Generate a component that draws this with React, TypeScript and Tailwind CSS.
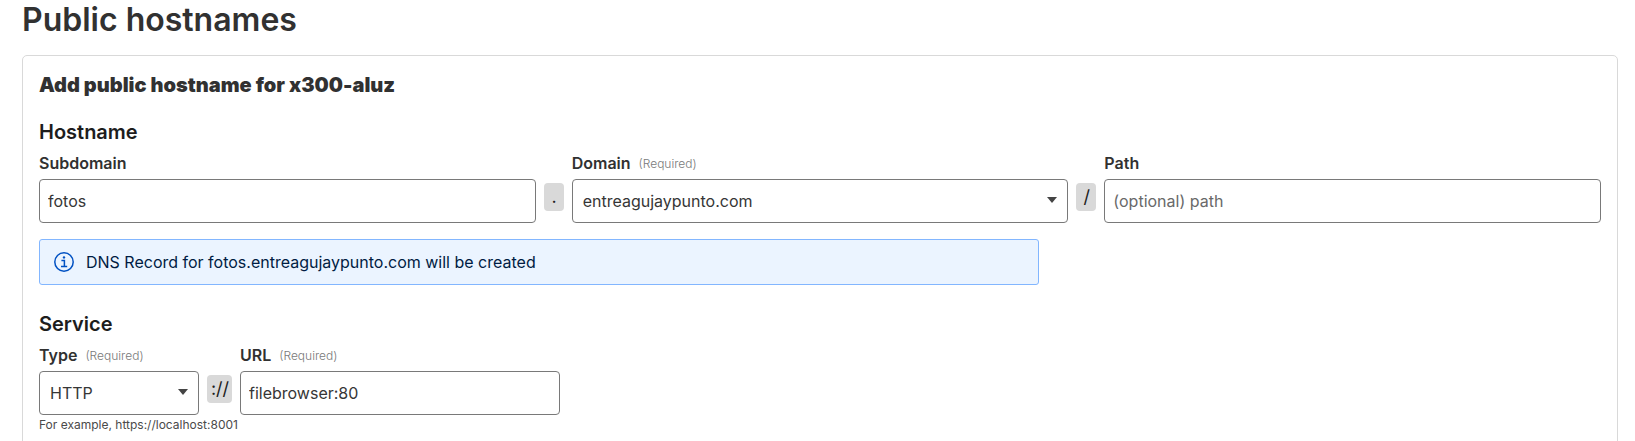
import type { ReactNode } from "react";

const box = "flex h-11 items-center rounded-[4px] border border-[#797979] text-base text-[#363636]";

function Label({ children, required }: { children: ReactNode; required?: boolean }) {
  return (
    <div className="flex h-6 items-center text-base leading-6 font-semibold text-[#313131]">
      {children}
      {required && <span className="mt-0.5 ml-2 text-[12px] leading-4 font-light text-[#797979]">(Required)</span>}
    </div>
  );
}

function Input({ value, placeholder }: { value?: string; placeholder?: string }) {
  return (
    <input
      className={`mt-1 w-full bg-white px-2 outline-none placeholder:text-[#696969] ${box}`}
      defaultValue={value}
      placeholder={placeholder}
    />
  );
}

function Select({ value }: { value: string }) {
  return (
    <div className={`mt-1 justify-between px-2.5 ${box}`}>
      {value}
      <svg width="10" height="6" viewBox="0 0 10 6" className="mb-[3px] shrink-0">
        <path d="M0 0h10L5 6z" fill="#444" />
      </svg>
    </div>
  );
}

function Chip({ children, wide }: { children: ReactNode; wide?: boolean }) {
  return (
    <div className={`mx-2 mt-8 flex h-7 shrink-0 items-center justify-center rounded bg-[#d9d9d9] pl-px text-[18px] leading-7 text-[#1d1d1d] ${wide ? "w-[25px]" : "w-5"}`}>
      {children}
    </div>
  );
}

export default function App() {
  return (
    <main className="h-[441px] overflow-hidden bg-white pr-[17px] pl-[22px] font-['Inter',sans-serif] text-[#313131]">
      <h1 className="h-[55px] text-[32px] leading-10 font-semibold">Public hostnames</h1>
      <section className="h-[500px] rounded-[5px] border border-[#d9d9d9] px-4 pt-4">
        <h2 className="text-xl leading-[26px] font-black">Add public hostname for x300-aluz</h2>
        <h3 className="mt-[21px] text-xl leading-[26px] font-semibold text-[#1d1d1d]">Hostname</h3>
        <div className="mt-1.5 flex">
          <div className="flex-1">
            <Label>Subdomain</Label>
            <Input value="fotos" />
          </div>
          <Chip>.</Chip>
          <div className="flex-1">
            <Label required>Domain</Label>
            <Select value="entreagujaypunto.com" />
          </div>
          <Chip>/</Chip>
          <div className="flex-1">
            <Label>Path</Label>
            <Input placeholder="(optional) path" />
          </div>
        </div>
        <div className="mt-4 flex h-[46px] w-[1000px] items-center rounded-[3px] border border-[#82b6ff] bg-[#ebf4ff] pl-3.5 text-base text-[#001c43]">
          <svg width="20" height="20" viewBox="0 0 20 20" fill="none" stroke="#0051c3" strokeWidth="1.5" className="mr-3">
            <circle cx="10" cy="10" r="9.2" />
            <path d="M7.4 8.4h3v6M7 14.6h6.2" />
            <circle cx="10" cy="5.4" r="1.2" fill="#0051c3" stroke="none" />
          </svg>
          DNS Record for fotos.entreagujaypunto.com will be created
        </div>
        <h3 className="mt-[26px] text-xl leading-[26px] font-semibold text-[#1d1d1d]">Service</h3>
        <div className="mt-1.5 flex">
          <div className="w-40">
            <Label required>Type</Label>
            <Select value="HTTP" />
          </div>
          <Chip wide>://</Chip>
          <div className="w-80">
            <Label required>URL</Label>
            <Input value="filebrowser:80" />
          </div>
        </div>
        <p className="mt-0.5 text-[12px] leading-4 text-[#4a4a4a]">For example, https://localhost:8001</p>
      </section>
    </main>
  );
}
